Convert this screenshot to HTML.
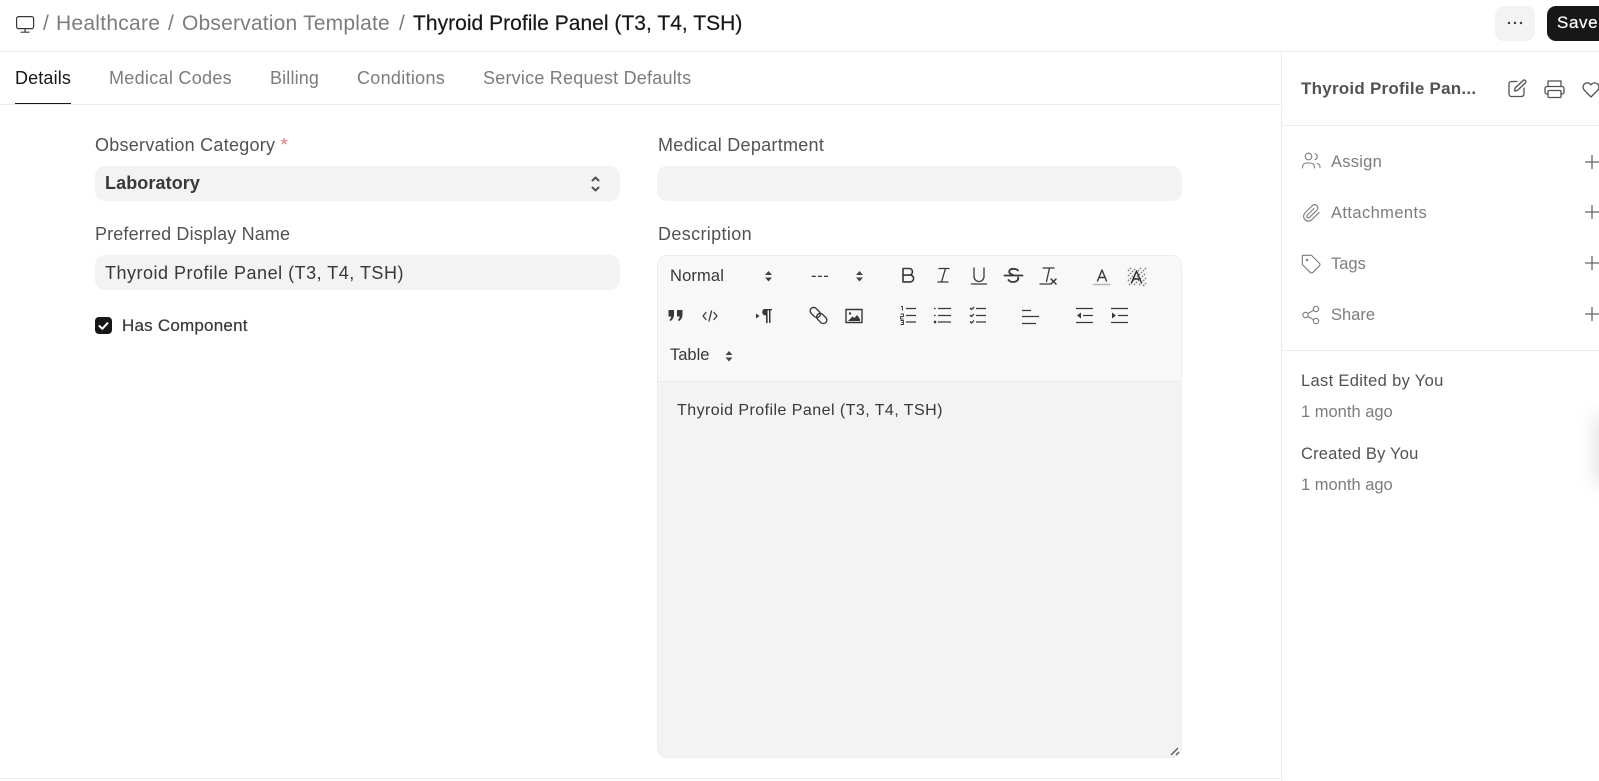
<!DOCTYPE html>
<html lang="en">
<head>
<meta charset="utf-8">
<title>Thyroid Profile Panel (T3, T4, TSH)</title>
<style>
html,body{margin:0;padding:0;background:#fff;width:1599px;height:781px;overflow:hidden}
body{position:relative;font-family:"Liberation Sans",sans-serif;color:#525252}
.t{position:absolute;white-space:nowrap;line-height:20px;height:20px}
.b{position:absolute}
.bc{font-size:21px;color:#7c7c7c}
.tab{font-size:18px;color:#7c7c7c}
.lb{font-size:18px;color:#525252}
.fd{position:absolute;background:#f3f3f3;border-radius:10px}
.sd{font-size:16.5px;color:#7c7c7c}
.tb{font-size:16.5px;color:#383838}
svg{position:absolute;left:0;top:0}
</style>
</head>
<body>
<div class="b" style="left:0;top:51px;width:1599px;height:1px;background:#ededed"></div>
<div class="b" style="left:0;top:104px;width:1281px;height:1px;background:#ededed"></div>
<div class="b" style="left:1281px;top:52px;width:1px;height:729px;background:#ededed"></div>
<div class="b" style="left:0;top:778px;width:1281px;height:1px;background:#ededed"></div>
<div class="b" style="left:1282px;top:125px;width:317px;height:1px;background:#ededed"></div>
<div class="b" style="left:1282px;top:350px;width:317px;height:1px;background:#ededed"></div>
<div class="b" style="left:15px;top:103px;width:56px;height:1px;background:#171717"></div>

<span class="t bc" style="left:43px;top:14px">/</span>
<span class="t bc" style="left:56px;top:14px;letter-spacing:.26px">Healthcare</span>
<span class="t bc" style="left:168px;top:14px">/</span>
<span class="t bc" style="left:182px;top:14px;letter-spacing:.2px">Observation Template</span>
<span class="t bc" style="left:399px;top:14px">/</span>
<span class="t bc" style="left:413px;top:14px;letter-spacing:.03px;color:#171717;-webkit-text-stroke:.2px #171717">Thyroid Profile Panel (T3, T4, TSH)</span>

<div class="b" style="left:1495px;top:6px;width:40px;height:35px;background:#f3f3f3;border-radius:9px"></div>
<div class="b" style="left:1547px;top:6px;width:70px;height:35px;background:#171717;border-radius:9px"></div>
<span class="t" style="left:1557px;top:13px;font-size:17px;color:#fff;letter-spacing:.6px;-webkit-text-stroke:.2px #fff">Save</span>

<span class="t tab" style="left:15px;top:68px;letter-spacing:.14px;color:#171717">Details</span>
<span class="t tab" style="left:109px;top:68px;letter-spacing:.3px">Medical Codes</span>
<span class="t tab" style="left:270px;top:68px;letter-spacing:.15px">Billing</span>
<span class="t tab" style="left:357px;top:68px;letter-spacing:.3px">Conditions</span>
<span class="t tab" style="left:483px;top:68px;letter-spacing:.22px">Service Request Defaults</span>

<span class="t lb" style="left:95px;top:135px;letter-spacing:.26px">Observation Category <span style="color:#e57373">*</span></span>
<div class="fd" style="left:95px;top:166px;width:525px;height:35px"></div>
<span class="t" style="left:105px;top:173px;font-size:18px;font-weight:bold;color:#383838;letter-spacing:.1px">Laboratory</span>
<span class="t lb" style="left:95px;top:224px;letter-spacing:.14px">Preferred Display Name</span>
<div class="fd" style="left:95px;top:255px;width:525px;height:35px"></div>
<span class="t" style="left:105px;top:263px;font-size:18px;color:#383838;letter-spacing:.5px">Thyroid Profile Panel (T3, T4, TSH)</span>
<div class="b" style="left:95px;top:317px;width:17px;height:17px;background:#171717;border-radius:4px"></div>
<span class="t" style="left:122px;top:316px;font-size:17px;color:#383838;letter-spacing:.22px;-webkit-text-stroke:.2px #383838">Has Component</span>

<span class="t lb" style="left:658px;top:135px;letter-spacing:.28px">Medical Department</span>
<div class="fd" style="left:657px;top:166px;width:525px;height:35px"></div>
<span class="t lb" style="left:658px;top:224px;letter-spacing:.36px">Description</span>

<div class="b" style="left:657px;top:255px;width:523px;height:501px;border:1px solid #ededed;border-radius:10px;overflow:hidden;background:#f3f3f3">
  <div style="height:125px;background:#f8f8f8;border-bottom:1px solid #ededed"></div>
</div>
<span class="t tb" style="left:670px;top:266px;letter-spacing:.15px">Normal</span>
<span class="t tb" style="left:811px;top:266px;letter-spacing:.6px">---</span>
<span class="t tb" style="left:670px;top:345px">Table</span>
<span class="t" style="left:677px;top:401px;font-size:16px;color:#383838;letter-spacing:.45px">Thyroid Profile Panel (T3, T4, TSH)</span>

<span class="t" style="left:1301px;top:79px;font-size:17px;font-weight:bold;color:#525252;letter-spacing:.24px">Thyroid Profile Pan...</span>
<span class="t sd" style="left:1331px;top:152px;letter-spacing:.25px">Assign</span>
<span class="t sd" style="left:1331px;top:203px;letter-spacing:.4px">Attachments</span>
<span class="t sd" style="left:1331px;top:254px">Tags</span>
<span class="t sd" style="left:1331px;top:305px">Share</span>
<span class="t" style="left:1301px;top:371px;font-size:16.5px;color:#525252;letter-spacing:.33px">Last Edited by You</span>
<span class="t sd" style="left:1301px;top:402px">1 month ago</span>
<span class="t" style="left:1301px;top:444px;font-size:16.5px;color:#525252;letter-spacing:.2px">Created By You</span>
<span class="t sd" style="left:1301px;top:475px">1 month ago</span>

<div class="b" style="left:1600px;top:420px;width:40px;height:60px;box-shadow:0 0 22px 4px rgba(0,0,0,.13)"></div>

<svg width="1599" height="781" viewBox="0 0 1599 781" fill="none" stroke-linecap="round" stroke-linejoin="round">
  <!-- monitor -->
  <g stroke="#383838" stroke-width="1.2">
    <rect x="16.6" y="16.6" width="17" height="12" rx="2"/>
    <path d="M25 28.6V32M21 32.2h8"/>
  </g>
  <!-- dots -->
  <g fill="#383838"><circle cx="1509" cy="23" r="1.2"/><circle cx="1515" cy="23" r="1.2"/><circle cx="1521" cy="23" r="1.2"/></g>
  <!-- edit -->
  <g stroke="#525252" stroke-width="1.3">
    <path d="M1517 81.500h-5.500a2.500 2.500 0 0 0-2.500 2.500v10a2.500 2.500 0 0 0 2.500 2.500h10a2.500 2.500 0 0 0 2.500-2.500v-6"/>
    <path d="M1514.500 91l.6-3 8-7.500a1.600 1.600 0 0 1 2.400 2.300l-8 7.600z"/>
  </g>
  <!-- print -->
  <g stroke="#525252" stroke-width="1.3">
    <path d="M1548 86.500V81h13v5.500"/>
    <path d="M1548 94h-1a2 2 0 0 1-2-2v-3.500a2 2 0 0 1 2-2h15a2 2 0 0 1 2 2V92a2 2 0 0 1-2 2h-1"/>
    <rect x="1548" y="90.500" width="13" height="7" rx="1"/>
  </g>
  <!-- heart -->
  <path d="M1591 97l-6.700-6.800a4.300 4.300 0 0 1 6.100-6.100l.6.700.6-.7a4.300 4.300 0 0 1 6.100 6.100z" stroke="#525252" stroke-width="1.3"/>
  <!-- select stepper -->
  <g stroke="#525252" stroke-width="2">
    <path d="M592.500 180.500l3-3 3 3M592.500 187.500l3 3 3-3"/>
  </g>
  <!-- checkmark -->
  <path d="M99.500 326l2.800 2.800 5.200-5.600" stroke="#fff" stroke-width="2"/>
  <!-- steppers -->
  <g fill="#444">
    <path d="M765 275l3.500-4 3.500 4zM765 277.500l3.500 4 3.500-4z"/>
    <path d="M856 275l3.500-4 3.500 4zM856 277.500l3.500 4 3.500-4z"/>
    <path d="M725.500 355l3.500-4 3.500 4zM725.500 357.500l3.500 4 3.500-4z"/>
  </g>
  <!-- toolbar row 1 -->
  <g stroke="#383838" stroke-width="1.3">
    <path d="M903 268.500h6.200a3.300 3.300 0 0 1 0 6.600H903zM903 275.100h7.200a3.400 3.400 0 0 1 0 6.800H903z" stroke-width="1.600"/>
    <path d="M939 268.500h10M938 282h10M945.500 268.500L941.500 282"/>
    <path d="M974 268v8.500a5 5 0 0 0 10 0V268M971.500 284h15"/>
    <path d="M1004.500 275.500h18M1018 270.500c-1.500-2-7-2.500-8.500 0-1 2 .5 3.500 3.500 4.500M1018 277.500c1 3-2.500 4.500-5 4.500-2 0-3.500-.6-4.500-2" stroke-width="1.800"/>
    <path d="M1043 268h11M1049.500 268l-3 13.500M1040 284h10"/>
    <path d="M1051 279l5 5M1056 279l-5 5" stroke-width="1.500"/>
    <path d="M1097.500 281l4.500-11 4.500 11M1099 277.500h6" stroke-width="1.400"/>
    <path d="M1093.500 284.500h16" stroke="#b5b5b5" stroke-width="1.500"/>
    <g stroke="#8a8a8a" stroke-linecap="butt">
      <path d="M1128 271l3-3M1128 276l8-8M1128 281l13-13M1129 285l17-17M1134 285l12-12M1139 285l7-7M1143 286l3-3" stroke-width="1.600" stroke-dasharray="1.600 1.200"/>
    </g>
    <path d="M1131.500 283l5-12 5 12M1133 279h7" stroke="#2c2c2c" stroke-width="1.400"/>
  </g>
  <!-- toolbar row 2 -->
  <g fill="#383838">
    <path d="M668.500 310h5.500v4.500c0 3-1.300 5-3.300 6.500l-1.400-1c1-.8 1.700-2 1.900-3.500h-2.700zM677 310h5.500v4.500c0 3-1.300 5-3.300 6.500l-1.400-1c1-.8 1.700-2 1.900-3.500H677z"/>
    <path d="M756 313.500v5l3.500-2.500z"/>
    <path d="M764 309h8v1.400h-1.500V323H769v-12.600h-1.400V323H766v-7.500c-2 0-3.800-1.200-3.800-3.200s1.500-3.300 1.800-3.300z"/>
    <path d="M1077 315.500l4-3v6z"/><path d="M1116 315.500l-4-3v6z"/>
  </g>
  <g stroke="#383838" stroke-width="1.300">
    <path d="M706 312.500l-3 3.500 3 3.500M714 312.500l3 3.500-3 3.500M711.500 311l-2.500 10"/>
    <rect x="809.500" y="309" width="11.500" height="7" rx="3.500" transform="rotate(45 815.250 312.500)" stroke-width="1.400"/>
    <rect x="816" y="315" width="11.500" height="7" rx="3.500" transform="rotate(45 821.750 318.500)" stroke-width="1.400"/>
    <rect x="846" y="309.500" width="16" height="13" stroke-width="1.400"/>
  </g>
  <path d="M848 321l4.500-4.500 2 1.500 2.500-3 3 4v2z" fill="#383838"/>
  <circle cx="850" cy="313.500" r="1.200" fill="#383838"/>
  <g stroke="#383838" stroke-width="1.300" stroke-linecap="butt">
    <path d="M906 308.500h10M906 315.500h10M906 322h10"/>
    <path d="M901 306.500h1.500v4M900.500 314h3v2.500h-3v2.500h3M900.500 320.500h3v2h-2M903.500 322.500v2h-3" stroke-width=".9"/>
    <path d="M938 308.500h13M938 315.500h13M938 322h13"/>
    <path d="M934 308.500h1.600M934 315.500h1.600M934 321l2 2M936 321l-2 2"/>
    <path d="M976 308.500h10M976 315.500h10M976 322h10"/>
    <path d="M970 308l1.500 1.500 2.500-2.500M970 315l1.500 1.500 2.500-2.500M970 321.500l1.500 1.500 2.500-2.500"/>
    <path d="M1022 310.500h9M1022 316.500h17M1022 323.500h14"/>
    <path d="M1076 308.500h17M1083 315.500h10M1076 322.500h17"/>
    <path d="M1111 308.500h17M1118 315.500h10M1111 322.500h17"/>
  </g>
  <!-- resize -->
  <path d="M1171 755l7-7M1176 755l3-3" stroke="#555" stroke-width="1.300" stroke-linecap="butt"/>
  <!-- sidebar icons -->
  <g stroke="#7c7c7c" stroke-width="1.100">
    <circle cx="1308.500" cy="156.500" r="3.300"/>
    <path d="M1302.500 168v-1a4 4 0 0 1 4-4h4a4 4 0 0 1 4 4v1"/>
    <path d="M1315 153.500a3.300 3.300 0 0 1 0 6.200M1317.500 163.500a4 4 0 0 1 2.500 4"/>
    <path transform="translate(1302 203.500) scale(.8)" stroke-width="1.400" d="M21.440 11.050l-9.190 9.190a6 6 0 0 1-8.490-8.490l9.190-9.190a4 4 0 0 1 5.660 5.660l-9.200 9.190a2 2 0 0 1-2.830-2.830l8.490-8.480"/>
    <path transform="translate(1300.500 253.500) scale(.92)" stroke-width="1.200" d="M20.590 13.410l-7.170 7.170a2 2 0 0 1-2.830 0L2 12V2h10l8.590 8.590a2 2 0 0 1 0 2.820z"/>
    <circle cx="1307" cy="260" r=".7" fill="#7c7c7c"/>
    <circle cx="1316" cy="309" r="2.700"/><circle cx="1305.500" cy="315" r="2.700"/><circle cx="1316" cy="321" r="2.700"/>
    <path d="M1308 313.500l5.500-3.200M1308 316.500l5.500 3.200"/>
  </g>
  <g stroke="#666" stroke-width="1.300" stroke-linecap="butt">
    <path d="M1592 155v14M1585 162h14"/>
    <path d="M1592 205v14M1585 212h14"/>
    <path d="M1592 256v14M1585 263h14"/>
    <path d="M1592 307v14M1585 314h14"/>
  </g>
</svg>
</body>
</html>
